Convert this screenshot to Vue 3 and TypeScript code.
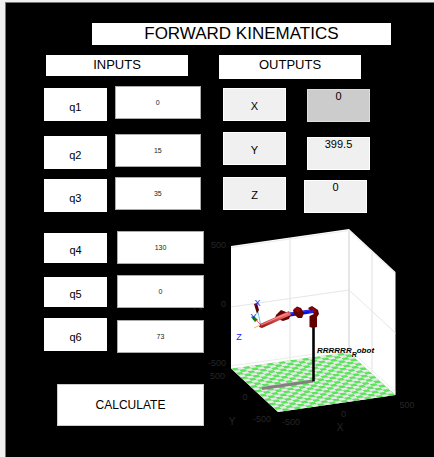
<script setup lang="ts">
import { computed, reactive, ref } from 'vue'

interface Joint {
  id: string
  value: string
}

const upperJoints = reactive<Joint[]>([
  { id: 'q1', value: '0' },
  { id: 'q2', value: '15' },
  { id: 'q3', value: '35' },
])

const lowerJoints = reactive<Joint[]>([
  { id: 'q4', value: '130' },
  { id: 'q5', value: '0' },
  { id: 'q6', value: '73' },
])

const position = ref({ x: 0, y: 399.5, z: 0 })

const outputs = computed(() => [
  { id: 'X', value: position.value.x },
  { id: 'Y', value: position.value.y },
  { id: 'Z', value: position.value.z },
])

function calculate(): void {
  position.value = { ...position.value }
}
</script>

<template>
  <main class="window">
    <form class="figure" @submit.prevent="calculate">
      <h1 class="title">FORWARD KINEMATICS</h1>

      <div class="columns">
        <section class="inputs">
          <h2 class="heading">INPUTS</h2>

          <div class="joints upper">
            <div v-for="joint in upperJoints" :key="joint.id" class="joint">
              <label class="name" :for="joint.id">{{ joint.id }}</label>
              <input :id="joint.id" v-model="joint.value" class="field" type="text" />
            </div>
          </div>

          <div class="joints lower">
            <div v-for="joint in lowerJoints" :key="joint.id" class="joint">
              <label class="name" :for="joint.id">{{ joint.id }}</label>
              <input :id="joint.id" v-model="joint.value" class="field" type="text" />
            </div>
          </div>

          <button class="calculate" type="submit">CALCULATE</button>
        </section>

        <section class="results">
          <h2 class="heading tall">OUTPUTS</h2>

          <div class="coords">
            <div v-for="item in outputs" :key="item.id" class="coord">
              <label class="axis" :for="'out-' + item.id">{{ item.id }}</label>
              <output :id="'out-' + item.id" class="value">{{ item.value }}</output>
            </div>
          </div>

          <svg class="plot" viewBox="204 222 230 226" role="img" aria-label="Robot arm plot">
            <defs>
              <pattern
                id="tiles"
                width="2"
                height="2"
                patternUnits="userSpaceOnUse"
                patternTransform="matrix(5.875 -0.825 2.35 2.175 231 369.5)"
              >
                <rect width="2" height="2" fill="#e9e9e9" />
                <rect width="1" height="1" fill="#5be35b" />
                <rect x="1" y="1" width="1" height="1" fill="#5be35b" />
              </pattern>
              <linearGradient id="link" x1="0" y1="0" x2="0.3" y2="1">
                <stop offset="0" stop-color="#a01010" />
                <stop offset="0.45" stop-color="#f07070" />
                <stop offset="1" stop-color="#8a0000" />
              </linearGradient>
            </defs>

            <polygon points="231,247 349,230 395.5,273 395.5,396 278,413 231,369.5" fill="#fff" />
            <g fill="none" stroke="#e6e6e6" stroke-width="1">
              <path d="M290 239V361M372 252V374" stroke="#f0f0f0" stroke-width="2" />
              <path d="M349 231V352.5" stroke="#dedede" stroke-width="1.5" />
              <path d="M231 308L349 291L395.5 334" />
              <path d="M231 248.500L349 231.500L395 274M231 367L349 350L395.500 393" stroke="#ececec" />
            </g>
            <polygon points="231,369.5 348.5,353 395.5,396 278,413" fill="url(#tiles)" />

            <path d="M262 389.500L313 382" stroke="#858080" stroke-width="3.200" />
            <path d="M313.500 326V382.500" stroke="#000" stroke-width="2.600" />

            <path d="M287 316L313 312" stroke="#1010d8" stroke-width="4" />
            <path d="M287 315L312 311" stroke="#3c3cff" stroke-width="1" />
            <g fill="#650000">
              <path d="M276 316L281 311L286 313L291 315L289 320L283 322L275 319Z" />
              <path d="M293 311L297 307.500L301 309L304 314L302 319L298 319L294 315Z" />
              <path d="M308 309L312 307L318 311L319 315L317 318V328L313 329L309.500 328V317L314 315Z" />
            </g>
            <path d="M294 310L297 308L301 311L298 314ZM310 309L312 308L317 312L314 314Z" fill="#930505" />
            <path d="M309 312L314 311L313 314L309 314Z" fill="#2222e8" />
            <path d="M260 325L289 312L291 316L262 329L259 328Z" fill="url(#link)" />
            <path d="M261 326L288 314" stroke="#ff9a9a" stroke-width="0.800" />
            <path d="M254 305L257 304L259 311L257 315Z" fill="#5c0000" />
            <path d="M258 313L260.500 325" stroke="#62b9df" stroke-width="0.900" />
            <path d="M251 318L254 317L258 321L255 323Z" fill="#078707" />
            <path d="M256 321L260 325" stroke="#d55" stroke-width="0.900" />
            <path d="M254 329L260 326" stroke="#edae55" stroke-width="0.900" />

            <g class="frame">
              <text x="257.500" y="307">X</text>
              <text x="253.500" y="321">Y</text>
              <text x="239" y="341">Z</text>
            </g>

            <g class="ticks">
              <text x="226" y="249" text-anchor="end">500</text>
              <text x="226" y="308" text-anchor="end">0</text>
              <text x="226" y="367" text-anchor="end">-500</text>
              <text x="225" y="380" text-anchor="end">500</text>
              <text x="245" y="401" text-anchor="middle">0</text>
              <text x="262" y="423" text-anchor="middle">-500</text>
              <text x="291" y="426" text-anchor="middle">-500</text>
              <text x="343.500" y="418" text-anchor="middle">0</text>
              <text x="407" y="409" text-anchor="middle">500</text>
            </g>
            <g class="axes">
              <text x="232" y="426" text-anchor="middle">Y</text>
              <text x="340" y="432" text-anchor="middle">X</text>
              <text transform="translate(202 311) rotate(-90)">Z</text>
            </g>
            <text class="robot" x="317" y="354">RRRRRR<tspan class="sub" dy="4">R</tspan><tspan dy="-4">obot</tspan></text>
          </svg>
        </section>
      </div>
    </form>
  </main>
</template>

<style>
body {
  background: #000;
}
</style>

<style scoped>
.window {
  box-sizing: border-box;
  min-height: 100vh;
  padding: 2px 0 0 5px;
  background: #f0f0f0;
  font-family: "Liberation Sans", Arial, sans-serif;
  color: #000;
}

.figure {
  box-sizing: border-box;
  min-height: calc(100vh - 2px);
  padding-top: 20px;
  border-top: 1px solid #777;
  border-left: 1px solid #777;
  background: #000;
}

.title,
.heading {
  margin: 0;
  background: #fff;
  font-weight: 400;
  text-align: center;
}

.title {
  margin: 0 10% 0 20%;
  height: 22px;
  font-size: 17px;
  line-height: 22px;
}

.columns {
  display: grid;
  grid-template-columns: 160fr 230fr;
  margin-top: 10px;
  padding-left: 38px;
}

.inputs {
  position: relative;
  z-index: 1;
}

.heading {
  margin: 0 16px 0 2px;
  height: 21px;
  font-size: 13px;
  line-height: 19px;
}

.heading.tall {
  margin: 0 73px 0 15px;
  height: 24px;
}

.joints {
  display: grid;
}

.upper {
  grid-template-rows: 48px 43px 35px;
  margin: 10px 3px 0 0;
}

.lower {
  grid-template-rows: 44px 43px 35px;
  margin-top: 19px;
}

.joint {
  display: grid;
  grid-template-columns: 63fr 87fr;
  column-gap: 8px;
  align-self: start;
  height: 35px;
}

.lower .joint {
  column-gap: 10px;
  height: 32px;
}

.lower .joint:last-child {
  height: 35px;
}

.name,
.field,
.axis,
.value {
  box-sizing: border-box;
  min-width: 0;
  height: 33px;
}

.name {
  display: flex;
  align-items: center;
  justify-content: center;
  align-self: end;
  padding-top: 4px;
  background: #fff;
  font-size: 11px;
}

.lower .name {
  align-self: center;
  height: 30px;
}

.lower .joint:last-child .name {
  align-self: start;
  height: 33px;
}

.field {
  width: 100%;
  margin: 0;
  padding: 0;
  border: 1px solid #ababab;
  background: #fff;
  color: #222;
  font: 7px "Liberation Sans", Arial, sans-serif;
  text-align: center;
}

.lower .joint:last-child .field {
  align-self: end;
}

.calculate {
  display: block;
  box-sizing: border-box;
  width: calc(100% - 13px);
  height: 42px;
  margin: 31px 0 0 13px;
  padding: 0;
  border: 1px solid #ccc;
  background: #fff;
  color: #000;
  font: 12px "Liberation Sans", Arial, sans-serif;
}

.coords {
  display: grid;
  grid-template-rows: 44px 45px 34px;
  margin: 9px 64px 0 19px;
}

.coord {
  display: grid;
  grid-template-columns: 1fr 1fr;
  column-gap: 21px;
  align-items: start;
}

.coord:last-child {
  column-gap: 18px;
  margin-right: 3px;
}

.axis {
  display: flex;
  align-items: center;
  justify-content: center;
  padding-top: 2px;
  border: 1px solid #fff;
  background: #f0f0f0;
  font-size: 11px;
}

.value {
  border: 1px solid #fff;
  background: #f0f0f0;
  font-size: 11px;
  line-height: 13px;
  text-align: center;
}

.coord:first-child .value {
  margin-top: 1px;
  border-color: #ddd;
  background: #ccc;
}

.coord:nth-child(2) .value {
  margin-top: 5px;
}

.coord:last-child .value {
  margin-top: 3px;
}

.plot {
  display: block;
  width: 100%;
  margin-top: 10px;
  overflow: visible;
}

.ticks {
  fill: #262626;
  font-size: 9px;
}

.axes {
  fill: #262626;
  font-size: 10px;
}

.frame {
  fill: #2525ff;
  font-size: 9px;
  text-anchor: middle;
}

.robot {
  fill: #000;
  font-size: 8px;
  font-weight: 700;
  font-style: italic;
}

.sub {
  font-size: 7px;
}
</style>
